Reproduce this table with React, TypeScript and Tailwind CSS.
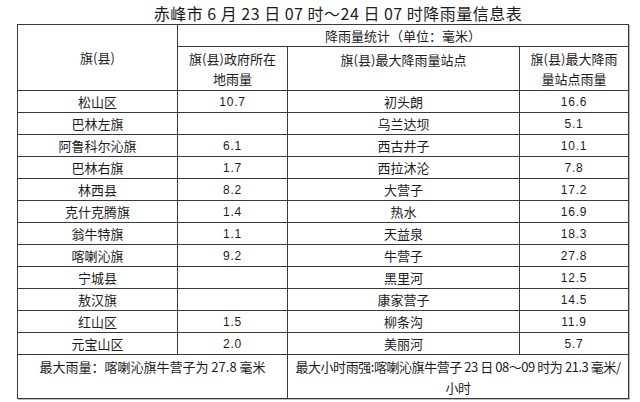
const rows: [string, string, string, string][] = [
  ["松山区", "10.7", "初头朗", "16.6"],
  ["巴林左旗", "", "乌兰达坝", "5.1"],
  ["阿鲁科尔沁旗", "6.1", "西古井子", "10.1"],
  ["巴林右旗", "1.7", "西拉沐沦", "7.8"],
  ["林西县", "8.2", "大营子", "17.2"],
  ["克什克腾旗", "1.4", "热水", "16.9"],
  ["翁牛特旗", "1.1", "天益泉", "18.3"],
  ["喀喇沁旗", "9.2", "牛营子", "27.8"],
  ["宁城县", "", "黑里河", "12.5"],
  ["敖汉旗", "", "康家营子", "14.5"],
  ["红山区", "1.5", "柳条沟", "11.9"],
  ["元宝山区", "2.0", "美丽河", "5.7"],
];

const cjk = "font-['Noto_Sans_CJK_SC',sans-serif]";
const num = "font-['Liberation_Sans','Noto_Sans_CJK_SC',sans-serif] text-[12px] tracking-[0.8px]";
const cell = "border border-[#3a3a3a] p-0 text-center align-middle";

export default function App() {
  return (
    <div className={`w-[640px] h-[402px] bg-white text-[#1c1c1c] ${cjk} overflow-hidden`}>
      <div className="h-[24px] pl-[36px] text-center text-[16px] leading-[26px] tracking-[0.5px]">
        赤峰市 6 月 23 日 07 时～24 日 07 时降雨量信息表
      </div>
      <table className="ml-[17px] w-[611px] table-fixed border-collapse border border-[#3a3a3a] text-[13px] shadow-[1px_1px_0_#bbb]">
        <colgroup>
          <col className="w-[160px]" />
          <col className="w-[110px]" />
          <col className="w-[232px]" />
          <col className="w-[109px]" />
        </colgroup>
        <thead>
          <tr className="h-[22px]">
            <th rowSpan={2} className={`${cell} font-normal leading-[20px]`}>
              旗(县)
            </th>
            <th colSpan={3} className={`${cell} font-normal leading-[20px]`}>
              降雨量统计（单位：毫米）
            </th>
          </tr>
          <tr className="h-[44px]">
            <th className={`${cell} font-normal leading-[20px]`}>
              旗(县)政府所在
              <br />
              地雨量
            </th>
            <th className={`${cell} !align-top pt-[3px] font-normal leading-[20px]`}>
              旗(县)最大降雨量站点
            </th>
            <th className={`${cell} font-normal leading-[20px]`}>
              旗(县)最大降雨
              <br />
              量站点雨量
            </th>
          </tr>
        </thead>
        <tbody>
          {rows.map(([name, gov, site, max]) => (
            <tr key={name} className="h-[22px]">
              <td className={`${cell} leading-[20px]`}>{name}</td>
              <td className={`${cell} ${num} leading-[20px]`}>{gov}</td>
              <td className={`${cell} leading-[20px]`}>{site}</td>
              <td className={`${cell} ${num} leading-[20px]`}>{max}</td>
            </tr>
          ))}
          <tr className="h-[43px]">
            <td colSpan={2} className={`${cell} !align-top pt-[1px] leading-[21px]`}>
              最大雨量：喀喇沁旗牛营子为 27.8 毫米
            </td>
            <td colSpan={2} className={`${cell} !align-top pt-[1px] leading-[21px] whitespace-nowrap tracking-[-0.45px]`}>
              最大小时雨强:喀喇沁旗牛营子 23 日 08～09 时为 21.3 毫米/
              <br />
              小时
            </td>
          </tr>
        </tbody>
      </table>
    </div>
  );
}
